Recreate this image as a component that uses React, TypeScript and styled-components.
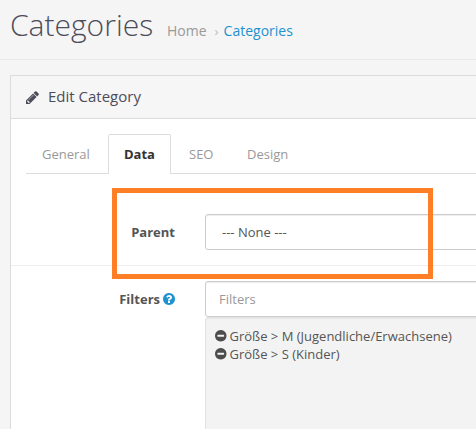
import React from "react";
import styled, { createGlobalStyle } from "styled-components";

const Global = createGlobalStyle`
  * { box-sizing: border-box; }
  html, body { margin: 0; height: 100%; overflow: hidden; }
  body {
    background: #f5f5f5;
    color: #555;
    font: 13px/18px "Open Sans", "Noto Sans", sans-serif;
  }
`;

const Page = styled.main`
  position: relative;
  width: 476px;
  height: 429px;
  overflow: hidden;
`;

const PageHeader = styled.header`
  display: flex;
  align-items: baseline;
  height: 60px;
  padding-left: 10px;
  border-bottom: 1px solid #e9e9e9;
  white-space: nowrap;
`;

const Title = styled.h1`
  margin: 4px 0 0;
  width: 157px;
  font-size: 30px;
  line-height: 42px;
  font-weight: 300;
  color: #4c4d5a;
`;

const Breadcrumb = styled.nav`
  display: flex;
  align-items: baseline;
  font-size: 14px;
  line-height: 20px;
`;

const Crumb = styled.a<{ $current?: boolean }>`
  color: ${(p) => (p.$current ? "#1e91cf" : "#999")};
`;

const Separator = styled.span`
  width: 17px;
  padding-left: 8px;
  font-size: 13px;
  color: #bbb;
`;

const Panel = styled.section`
  width: 640px;
  height: 400px;
  margin: 15px 0 0 10px;
  border: 1px solid #dcdcdc;
  background: #fff;
`;

const PanelHeading = styled.div`
  display: flex;
  align-items: center;
  height: 43px;
  padding-left: 15px;
  border-bottom: 1px solid #dcdcdc;
  background: #f6f6f6;
`;

const PanelTitle = styled.h3`
  margin: 0 0 2px 9px;
  font-size: 15px;
  line-height: 20px;
  font-weight: 400;
  color: #4c4d5a;
`;

const Tabs = styled.div`
  display: flex;
  gap: 2px;
  height: 40px;
  margin: 15px 15px 24px;
  border-bottom: 1px solid #ddd;
`;

const Tab = styled.div<{ $width: number; $active?: boolean }>`
  width: ${(p) => p.$width}px;
  height: 40px;
  padding: 10px 0 0 15px;
  border: 1px solid ${(p) => (p.$active ? "#ddd" : "transparent")};
  border-bottom: 0;
  border-radius: 2px 2px 0 0;
  background: ${(p) => (p.$active ? "#fff" : "transparent")};
  background-clip: padding-box;
  color: ${(p) => (p.$active ? "#333" : "#999")};
  font-weight: ${(p) => (p.$active ? 700 : 400)};
`;

const FormGroup = styled.div<{ $separated?: boolean }>`
  display: grid;
  grid-template-columns: 164px 1fr;
  column-gap: 30px;
  height: ${(p) => (p.$separated ? "164px" : "67px")};
  padding-top: 15px;
  border-top: 1px solid ${(p) => (p.$separated ? "#ededed" : "transparent")};
`;

const Label = styled.label`
  display: flex;
  justify-content: flex-end;
  align-items: center;
  gap: 3px;
  height: 36px;
  font-weight: 700;
`;

const Control = styled.div<{ $inset: number; $muted?: boolean }>`
  height: 36px;
  padding: 8px ${(p) => p.$inset}px;
  border: 1px solid #ccc;
  border-radius: 3px;
  background: #fff;
  box-shadow: inset 0 1px 1px rgba(0, 0, 0, 0.075);
  color: ${(p) => (p.$muted ? "#999" : "#555")};
`;

const Well = styled.div`
  height: 150px;
  padding: 9px 9px;
  border: 1px solid #e3e3e3;
  border-radius: 3px;
  background: #f3f3f3;
  box-shadow: inset 0 1px 1px rgba(0, 0, 0, 0.05);
`;

const FilterItem = styled.div`
  display: flex;
  align-items: center;
  gap: 3px;
  height: 18px;
`;

const Glyph = styled.svg`
  display: block;
  flex: none;
`;

const Highlight = styled.div`
  position: absolute;
  left: 112px;
  top: 188px;
  width: 321px;
  height: 91px;
  border: 5px solid #ff7f27;
  pointer-events: none;
`;

const disc =
  "M1664 896q0 209-103 385.5t-279.5 279.5-385.5 103-385.5-103-279.5-279.5-103-385.5 103-385.5 279.5-279.5 385.5-103 385.5 103 279.5 279.5 103 385.5z";

const PencilIcon = () => (
  <Glyph width="13" height="13" viewBox="128 128 1536 1536" fill="#4c4d5a">
    <path d="M491 1536l91-91-235-235-91 91v107h128v128h107zm523-928q0-22-22-22-10 0-17 7l-542 542q-7 7-7 17 0 22 22 22 10 0 17-7l542-542q7-7 7-17zm-54-192l416 416-832 832h-416v-416zm683 96q0 53-37 90l-166 166-416-416 166-165q36-38 90-38 53 0 91 38l235 234q37 39 37 91z" />
  </Glyph>
);

const HelpIcon = () => (
  <Glyph width="12" height="12" viewBox="128 128 1536 1536" fill="#1e91cf">
    <path
      d={
        "M1024 1376v-192q0-14-9-23t-23-9h-192q-14 0-23 9t-9 23v192q0 14 9 23t23 9h192q14 0 23-9t9-23zm256-672q0-88-55.5-163t-138.5-116-170-41q-243 0-371 213-15 24 8 42l132 100q7 6 19 6 16 0 25-12 53-68 86-92 34-24 86-24 48 0 85.5 26t37.5 59q0 38-20 61t-68 45q-63 28-115.5 86.5t-52.5 125.5v36q0 14 9 23t23 9h192q14 0 23-9t9-23q0-19 21.5-49.5t54.5-49.5q32-18 49-28.5t46-35 44.5-48 28-60.5 12.5-81z" +
        disc
      }
      fillRule="evenodd"
    />
  </Glyph>
);

const MinusIcon = () => (
  <Glyph width="11.5" height="11.5" viewBox="128 128 1536 1536" fill="#4d4d4d">
    <path
      d={
        "M1344 960v-128q0-26-19-45t-45-19h-768q-26 0-45 19t-19 45v128q0 26 19 45t45 19h768q26 0 45-19t19-45z" +
        disc
      }
      fillRule="evenodd"
    />
  </Glyph>
);

const tabs = [
  { name: "General", width: 80 },
  { name: "Data", width: 63, active: true },
  { name: "SEO", width: 56 },
  { name: "Design", width: 75 },
];

const filters = ["Größe > M (Jugendliche/Erwachsene)", "Größe > S (Kinder)"];

export default function App() {
  return (
    <Page>
      <Global />
      <PageHeader>
        <Title>Categories</Title>
        <Breadcrumb>
          <Crumb>Home</Crumb>
          <Separator>›</Separator>
          <Crumb $current>Categories</Crumb>
        </Breadcrumb>
      </PageHeader>
      <Panel>
        <PanelHeading>
          <PencilIcon />
          <PanelTitle>Edit Category</PanelTitle>
        </PanelHeading>
        <Tabs>
          {tabs.map((t) => (
            <Tab key={t.name} $width={t.width} $active={t.active}>
              {t.name}
            </Tab>
          ))}
        </Tabs>
        <FormGroup>
          <Label>Parent</Label>
          <Control $inset={16}>--- None ---</Control>
        </FormGroup>
        <FormGroup $separated>
          <Label>
            Filters <HelpIcon />
          </Label>
          <div>
            <Control $inset={13} $muted>
              Filters
            </Control>
            <Well>
              {filters.map((f) => (
                <FilterItem key={f}>
                  <MinusIcon />
                  {f}
                </FilterItem>
              ))}
            </Well>
          </div>
        </FormGroup>
      </Panel>
      <Highlight />
    </Page>
  );
}
